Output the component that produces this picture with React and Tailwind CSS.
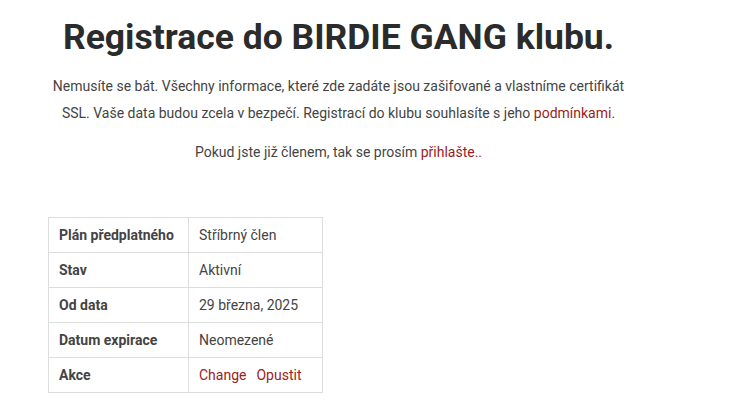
export default function App() {
  const rows = [
    ['Plán předplatného', 'Stříbrný člen'],
    ['Stav', 'Aktivní'],
    ['Od data', '29 března, 2025'],
    ['Datum expirace', 'Neomezené'],
  ];

  return (
    <div className="min-h-screen bg-white font-['Roboto',sans-serif] text-[#444]">
      <div className="ml-[48px] w-[581px] pt-[12px]">
        <h1 className="text-center text-[35.5px] font-bold leading-[50px] text-[#2b2b2b]">
          Registrace do BIRDIE GANG klubu.
        </h1>
        <p className="mt-[11px] text-center text-[14px] leading-[27px]">
          Nemusíte se bát. Všechny informace, které zde zadáte jsou zašifované a vlastníme certifikát SSL. Vaše
          data budou zcela v bezpečí. Registrací do klubu souhlasíte s jeho{' '}
          <span className="whitespace-nowrap">
            <a className="text-[#9b1c1c]">podmínkami</a>.
          </span>
        </p>
        <p className="mt-[12px] text-center text-[14px] leading-[27px]">
          Pokud jste již členem, tak se prosím <a className="text-[#9b1c1c]">přihlašte..</a>
        </p>

        <table className="mt-[51px] border-collapse text-[14px]">
          <tbody>
            {rows.map(([k, v]) => (
              <tr key={k} className="h-[35px]">
                <td className="w-[140px] border border-[#ddd] px-[10px] font-bold">{k}</td>
                <td className="w-[134px] border border-[#ddd] px-[10px]">{v}</td>
              </tr>
            ))}
            <tr className="h-[35px]">
              <td className="border border-[#ddd] px-[10px] font-bold">Akce</td>
              <td className="border border-[#ddd] px-[10px] text-[#9b1c1c]">
                <a>Change</a>
                <a className="ml-[10px]">Opustit</a>
              </td>
            </tr>
          </tbody>
        </table>
      </div>
    </div>
  );
}
